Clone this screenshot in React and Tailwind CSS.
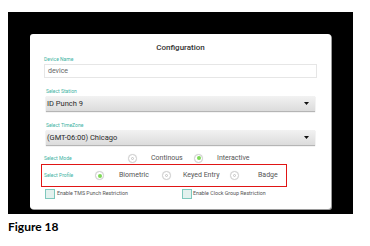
import React from "react";

const teal = "text-[#3db3a3]";

function Radio({ checked }) {
  return (
    <span className="flex h-[9px] w-[9px] shrink-0 items-center justify-center rounded-full border border-[#cfcfcf] bg-white shadow-[0_0_1px_#ddd]">
      <span
        className={
          checked
            ? "h-[4px] w-[4px] rounded-full bg-[#7ed957]"
            : "h-[3px] w-[3px] rounded-full border border-[#c4c4c4]"
        }
      />
    </span>
  );
}

function Select({ value }) {
  return (
    <div className="ml-[16px] mt-[2px] flex h-[15px] w-[269px] items-center justify-between bg-gradient-to-b from-[#f2f2f2] to-[#dcdcdc] pl-[1px] pr-[6px] shadow-[0_1px_1px_#b5b5b5]">
      <span className="text-[7.5px] leading-none text-[#2a2a2a]">{value}</span>
      <svg width="5" height="3" viewBox="0 0 5 3">
        <path d="M0 0 L5 0 L2.5 3 Z" fill="#111" />
      </svg>
    </div>
  );
}

export default function App() {
  return (
    <div
      className="h-[246px] w-[370px] bg-white pl-[8px] pt-[12px]"
      style={{ fontFamily: "Roboto, 'Liberation Sans', sans-serif" }}
    >
      <div className="h-[202px] w-[345px] bg-black pl-[22px] pt-[22px]">
        <div className="flex h-[175px] w-[301px] flex-col rounded-[3px] bg-white shadow-[1px_1px_0_#9a9a9a]">
          <div className="pt-[9px] text-center text-[8px] font-medium leading-[10px] text-[#333]">
            Configuration
          </div>
          <div className={`ml-[14px] mt-[3px] text-[5px] leading-[6px] ${teal}`}>Device Name</div>
          <div className="ml-[14px] mt-[2px] flex h-[14px] w-[273px] items-center border border-[#e6e6e6] pl-[3px]">
            <span className="text-[7px] leading-none text-[#666]">device</span>
          </div>
          <div className={`ml-[16px] mt-[10px] text-[5px] leading-[6px] ${teal}`}>Select Station</div>
          <Select value="ID Punch 9" />
          <div className={`ml-[16px] mt-[11px] text-[5px] leading-[6px] ${teal}`}>Select TimeZone</div>
          <Select value="(GMT-06:00) Chicago" />

          <div className="mt-[8px] flex h-[10px] items-center pl-[14px]">
            <span className={`w-[84px] shrink-0 text-[5px] leading-none ${teal}`}>Select Mode</span>
            <Radio />
            <span className="ml-[14px] w-[30px] shrink-0 whitespace-nowrap text-[7px] leading-none text-[#555]">Continous</span>
            <span className="ml-[13px]"><Radio checked /></span>
            <span className="ml-[14px] w-[32px] shrink-0 whitespace-nowrap text-[7px] leading-none text-[#555]">Interactive</span>
          </div>

          <div className="ml-[11px] mt-[1px] flex h-[23px] w-[246px] items-center border border-[#e01515] pl-[2px]">
            <span className={`w-[51px] shrink-0 text-[5px] leading-none ${teal}`}>Select Profile</span>
            <Radio checked />
            <span className="ml-[15px] w-[29px] shrink-0 whitespace-nowrap text-[7px] leading-none text-[#555]">Biometric</span>
            <span className="ml-[14px]"><Radio /></span>
            <span className="ml-[12px] w-[35px] shrink-0 whitespace-nowrap text-[7px] leading-none text-[#555]">Keyed Entry</span>
            <span className="ml-[12px]"><Radio /></span>
            <span className="ml-[19px] w-[20px] shrink-0 whitespace-nowrap text-[7px] leading-none text-[#555]">Badge</span>
          </div>

          <div className="mt-[2px] flex h-[10px] items-center pl-[15px]">
            <span className="h-[10px] w-[10px] shrink-0 border border-[#7fc8bd] bg-[#e3f1ee]" />
            <span className="ml-[2px] w-[73px] shrink-0 whitespace-nowrap text-[5.3px] leading-none text-[#555]">Enable TMS Punch Restriction</span>
            <span className="ml-[52px] h-[10px] w-[10px] shrink-0 border border-[#7fc8bd] bg-[#e3f1ee]" />
            <span className="ml-[1px] w-[74px] shrink-0 whitespace-nowrap text-[5.3px] leading-none text-[#555]">Enable Clock Group Restriction</span>
          </div>
        </div>
      </div>
      <div
        className="mt-[6px] text-[12px] font-bold leading-[14px] text-black"
        style={{ fontFamily: "Lato, 'Open Sans', sans-serif" }}
      >
        Figure 18
      </div>
    </div>
  );
}
